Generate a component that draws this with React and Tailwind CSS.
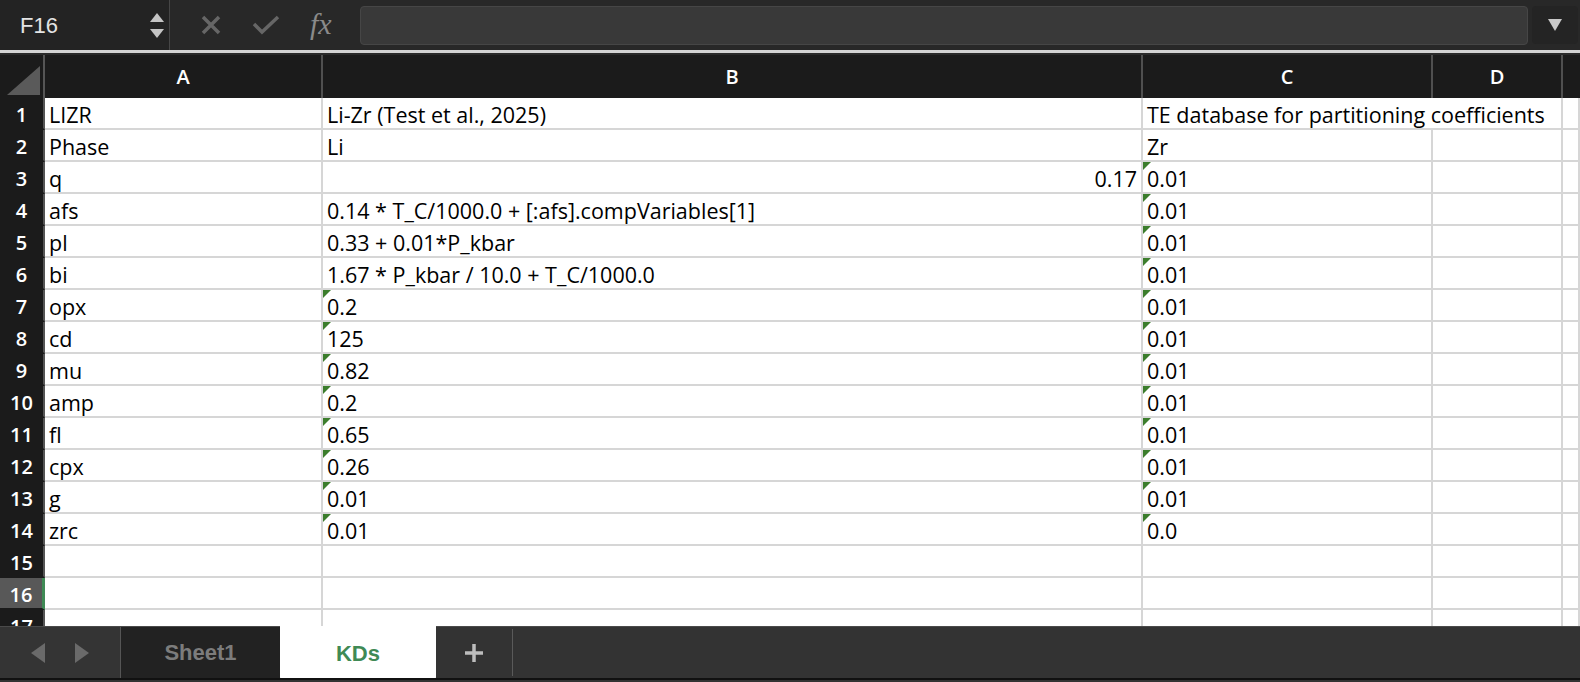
import React from 'react';

const cols = ['A', 'B', 'C', 'D'];

const rows = [
  { a: 'LIZR', b: 'Li-Zr (Test et al., 2025)', c: 'TE database for partitioning coefficients', cSpan: true },
  { a: 'Phase', b: 'Li', c: 'Zr' },
  { a: 'q', b: '0.17', bRight: true, c: '0.01', cFlag: true },
  { a: 'afs', b: '0.14 * T_C/1000.0 + [:afs].compVariables[1]', c: '0.01', cFlag: true },
  { a: 'pl', b: '0.33 + 0.01*P_kbar', c: '0.01', cFlag: true },
  { a: 'bi', b: '1.67 * P_kbar / 10.0 + T_C/1000.0', c: '0.01', cFlag: true },
  { a: 'opx', b: '0.2', bFlag: true, c: '0.01', cFlag: true },
  { a: 'cd', b: '125', bFlag: true, c: '0.01', cFlag: true },
  { a: 'mu', b: '0.82', bFlag: true, c: '0.01', cFlag: true },
  { a: 'amp', b: '0.2', bFlag: true, c: '0.01', cFlag: true },
  { a: 'fl', b: '0.65', bFlag: true, c: '0.01', cFlag: true },
  { a: 'cpx', b: '0.26', bFlag: true, c: '0.01', cFlag: true },
  { a: 'g', b: '0.01', bFlag: true, c: '0.01', cFlag: true },
  { a: 'zrc', b: '0.01', bFlag: true, c: '0.0', cFlag: true },
  {},
  {},
  {},
];

const gridCols = 'grid grid-cols-[45px_278px_820px_290px_130px_1fr]';

const Flag = () => (
  <span className="absolute top-0 left-0 w-0 h-0 border-t-[8px] border-t-[#3b7d2c] border-r-[8px] border-r-transparent" />
);

const Cell = ({ text, flag, right, span }) => (
  <div
    className={`relative h-[32px] border-r-2 border-b-2 border-[#d6d6d6] bg-white px-[4px] flex items-center whitespace-nowrap overflow-hidden ${
      right ? 'justify-end' : ''
    } ${span ? 'col-span-2' : ''}`}
  >
    {flag && <Flag />}
    <span className="pt-[5px]">{text}</span>
  </div>
);

const App = () => {
  return (
    <div
      className="w-[1580px] h-[682px] flex flex-col overflow-hidden bg-[#1b1b1b]"
      style={{ fontFamily: '"Open Sans", "Liberation Sans", sans-serif' }}
    >
      {/* formula bar */}
      <div className="h-[50px] flex items-center bg-[#282828]">
        <div className="w-[170px] h-full flex items-center justify-between bg-[#232323] border-r border-[#464646] pl-[20px] pr-[4px]">
          <span className="text-[22px] text-[#e4e4e4]" style={{ fontFamily: '"Liberation Sans", sans-serif' }}>F16</span>
          <svg width="16" height="36" viewBox="0 0 16 36">
            <path d="M8 6 L15 15 L1 15 Z" fill="#c4c4c4" />
            <path d="M1 22 L15 22 L8 31 Z" fill="#c4c4c4" />
          </svg>
        </div>
        <div className="w-[190px] flex items-center pl-[30px] gap-[30px]">
          <svg width="22" height="22" viewBox="0 0 22 22">
            <path d="M3 3 L19 19 M19 3 L3 19" stroke="#666" strokeWidth="3.5" />
          </svg>
          <svg width="28" height="22" viewBox="0 0 28 22">
            <path d="M2 10 L10 18 L26 3" stroke="#666" strokeWidth="3.5" fill="none" />
          </svg>
          <span className="text-[30px] italic text-[#8a8a8a] -mt-[4px]" style={{ fontFamily: '"Liberation Serif", serif' }}>fx</span>
        </div>
        <div className="flex-1 h-[39px] bg-[#393939] border border-[#464646] rounded-[4px]" />
        <div className="w-[46px] h-[38px] bg-[#242424] rounded-[4px] ml-[4px] mr-[2px] flex items-center justify-center">
          <svg width="14" height="12" viewBox="0 0 14 12">
            <path d="M0 0 L14 0 L7 12 Z" fill="#c8c8c8" />
          </svg>
        </div>
      </div>
      <div className="h-[3px] bg-[#d4d4d4]" />
      <div className="h-[2px] bg-[#2a2a2a]" />

      {/* column headers */}
      <div className={`${gridCols} h-[43px] bg-[#1b1b1b]`}>
        <div className="border-r-2 border-[#555] flex items-end justify-end pr-[3px] pb-[3px]">
          <svg width="33" height="29" viewBox="0 0 33 29">
            <path d="M33 0 L33 29 L0 29 Z" fill="#5a5a5a" />
          </svg>
        </div>
        {cols.map((c) => (
          <div
            key={c}
            className="border-r-2 border-[#505050] flex items-center justify-center text-white text-[20px] font-semibold"
          >
            {c}
          </div>
        ))}
        <div />
      </div>

      {/* grid body */}
      <div className="flex-1 overflow-hidden text-[21.5px] text-black">
        {rows.map((r, i) => {
          const sel = i === 15;
          return (
            <div key={i} className={gridCols}>
              <div
                className={`h-[32px] flex items-center justify-center text-white text-[20px] font-semibold pt-[4px] border-b-2 border-[#1b1b1b] ${
                  sel ? 'bg-[#585858] border-r-[3px] border-r-[#3f8a55]' : 'bg-[#1b1b1b] border-r-2 border-r-[#555]'
                }`}
              >
                {i + 1}
              </div>
              <Cell text={r.a} />
              <Cell text={r.b} flag={r.bFlag} right={r.bRight} />
              <Cell text={r.c} flag={r.cFlag} span={r.cSpan} />
              {!r.cSpan && <Cell />}
              <Cell />
            </div>
          );
        })}
      </div>

      {/* sheet tabs */}
      <div
        className="h-[52px] flex bg-[#333] border-t border-[#4a4a4a]"
        style={{ fontFamily: '"Liberation Sans", sans-serif' }}
      >
        <div className="w-[121px] flex items-center justify-center gap-[30px] border-r border-[#555] bg-[#343434]">
          <svg width="14" height="20" viewBox="0 0 14 20">
            <path d="M14 0 L14 20 L0 10 Z" fill="#6a6a6a" />
          </svg>
          <svg width="14" height="20" viewBox="0 0 14 20">
            <path d="M0 0 L14 10 L0 20 Z" fill="#6a6a6a" />
          </svg>
        </div>
        <div className="w-[159px] flex items-center justify-center bg-[#222] text-[#7c7c7c] text-[22px] font-semibold">
          Sheet1
        </div>
        <div className="w-[156px] h-[54px] -mt-[1px] flex items-center justify-center bg-white text-[#3f8a55] text-[22px] font-bold rounded-b-[3px]">
          KDs
        </div>
        <div className="w-[77px] flex items-center justify-center border-r border-[#5a5a5a] my-[2px]">
          <svg width="20" height="20" viewBox="0 0 20 20">
            <path d="M10 1 L10 19 M1 10 L19 10" stroke="#bdbdbd" strokeWidth="3.5" />
          </svg>
        </div>
        <div className="flex-1" />
      </div>
      <div className="h-[2px] bg-[#111]" />
      <div className="h-[2px] bg-[#333]" />
    </div>
  );
};

export default App;
